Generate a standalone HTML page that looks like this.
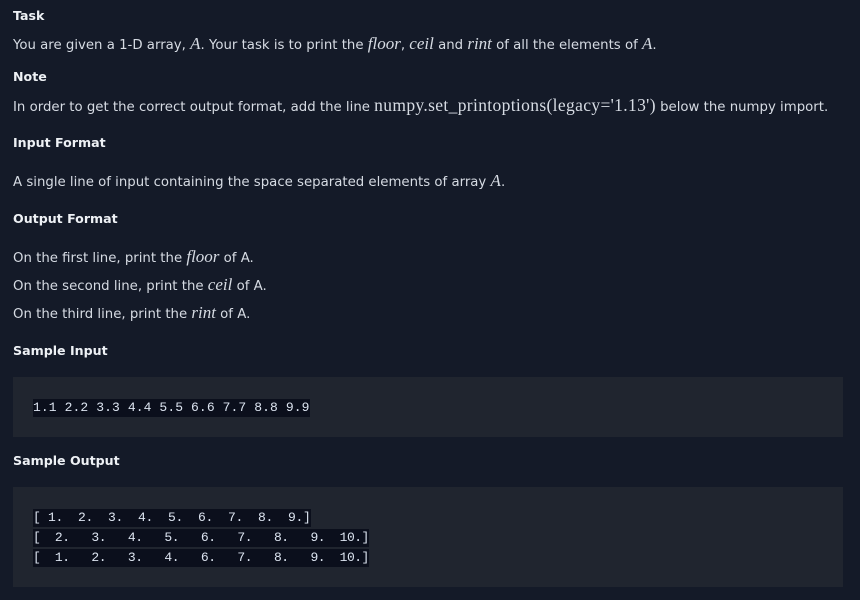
<!DOCTYPE html>
<html><head><style>
body{margin:0;width:860px;height:600px;background:#141a28;color:#d6dbe3;font-family:"DejaVu Sans",sans-serif;font-size:13.3px;position:relative;overflow:hidden}
.a{position:absolute;left:13px;white-space:nowrap;line-height:18px}
.h{font-weight:bold;color:#eef1f5;font-size:12.6px}
.m{font-family:"Liberation Serif",serif;font-style:italic;font-size:17px}
.r{font-family:"Liberation Serif",serif;font-size:17.5px;letter-spacing:0.35px}
.box{position:absolute;left:13px;width:830px;background:#20252f}
.c{position:absolute;left:33px;font-family:"Liberation Mono",monospace;font-size:13px;line-height:18px;background:#0b0f1c;color:#dce4f0;white-space:pre}
</style></head><body>
<div class="a h" style="top:7px">Task</div>
<div class="a" style="top:35px">You are given a 1-D array, <span class="m">A</span>. Your task is to print the <span class="m">floor</span>, <span class="m">ceil</span> and <span class="m">rint</span> of all the elements of <span class="m">A</span>.</div>
<div class="a h" style="top:68px">Note</div>
<div class="a" style="top:96px">In order to get the correct output format, add the line <span class="r">numpy.set_printoptions(legacy='1.13')</span> below the numpy import.</div>
<div class="a h" style="top:134px">Input Format</div>
<div class="a" style="top:172px">A single line of input containing the space separated elements of array <span class="m">A</span>.</div>
<div class="a h" style="top:210px">Output Format</div>
<div class="a" style="top:248px">On the first line, print the <span class="m">floor</span> of A.</div>
<div class="a" style="top:276px">On the second line, print the <span class="m">ceil</span> of A.</div>
<div class="a" style="top:304px">On the third line, print the <span class="m">rint</span> of A.</div>
<div class="a h" style="top:342px">Sample Input</div>
<div class="box" style="top:377px;height:60px"></div>
<div class="c" style="top:399px;letter-spacing:0.1px">1.1 2.2 3.3 4.4 5.5 6.6 7.7 8.8 9.9</div>
<div class="a h" style="top:452px">Sample Output</div>
<div class="box" style="top:487px;height:100px"></div>
<div class="c" style="top:509px;letter-spacing:-0.3px">[ 1.  2.  3.  4.  5.  6.  7.  8.  9.]</div>
<div class="c" style="top:529px;letter-spacing:-0.5px">[  2.   3.   4.   5.   6.   7.   8.   9.  10.]</div>
<div class="c" style="top:549px;letter-spacing:-0.5px">[  1.   2.   3.   4.   6.   7.   8.   9.  10.]</div>
</body></html>
